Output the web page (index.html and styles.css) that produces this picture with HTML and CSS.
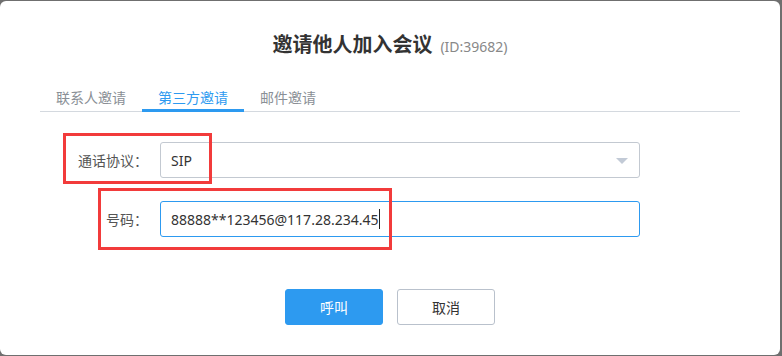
FILE: index.html
```html
<!DOCTYPE html>
<html lang="zh-CN">
<head>
<meta charset="utf-8">
<title>邀请他人加入会议</title>
<link rel="stylesheet" href="styles.css">
</head>
<body>
<div class="dialog">
  <div class="title-row">
    <h1 class="title">邀请他人加入会议</h1>
    <span class="meeting-id">(ID:39682)</span>
  </div>
  <div class="tabs">
    <div class="tab">联系人邀请</div>
    <div class="tab active">第三方邀请</div>
    <div class="tab">邮件邀请</div>
  </div>
  <div class="form">
    <div class="row">
      <label class="label">通话协议：</label>
      <div class="field select">
        <span class="value">SIP</span>
        <span class="arrow"></span>
      </div>
    </div>
    <div class="row row-number">
      <label class="label">号码：</label>
      <div class="field focus">
        <span class="value">88888**123456@117.28.234.45</span><span class="caret"></span>
      </div>
    </div>
  </div>
  <div class="actions">
    <button class="btn btn-primary">呼叫</button>
    <button class="btn btn-default">取消</button>
  </div>
  <div class="mark mark-protocol"></div>
  <div class="mark mark-number"></div>
</div>
</body>
</html>
```
FILE: styles.css
```css
html, body {
  margin: 0;
  padding: 0;
}
body {
  width: 782px;
  height: 356px;
  background: #6f6f6f;
  font-family: "Noto Sans", "Noto Sans CJK SC", sans-serif;
  overflow: hidden;
}
.dialog {
  position: relative;
  box-sizing: border-box;
  margin-top: 1px;
  width: 780px;
  height: 354px;
  background: #fff;
  border-radius: 6px;
  padding-top: 29px;
}
.title-row {
  display: flex;
  justify-content: center;
  align-items: baseline;
  gap: 8px;
  height: 28px;
}
.title {
  margin: 0;
  font-family: "Noto Sans CJK SC", sans-serif;
  font-size: 20px;
  line-height: 28px;
  font-weight: 700;
  color: #333;
}
.meeting-id {
  font-size: 14px;
  color: #888;
}
.tabs {
  display: flex;
  margin: 27px 40px 0;
  border-bottom: 1px solid #d4d9df;
}
.tab {
  padding: 0 16px;
  font-family: "Noto Sans CJK SC", sans-serif;
  font-size: 14px;
  line-height: 24px;
  color: #8a8f96;
  border-bottom: 3px solid transparent;
  margin-bottom: -1px;
}
.tab.active {
  color: #2d9af0;
  border-bottom-color: #2d9af0;
}
.form {
  display: flex;
  flex-direction: column;
  gap: 23px;
  margin-top: 30px;
}
.row {
  display: flex;
  align-items: center;
  gap: 12px;
}
.label {
  width: 148px;
  text-align: right;
  font-family: "Noto Sans CJK SC", sans-serif;
  font-size: 14px;
  color: #555;
}
.field {
  position: relative;
  box-sizing: border-box;
  width: 480px;
  height: 36px;
  border: 1px solid #c3c9d1;
  border-radius: 3px;
  padding: 0 10px;
  display: flex;
  align-items: center;
  font-size: 14px;
  color: #333;
}
.field.focus {
  border-color: #2d9af0;
}
.arrow {
  position: absolute;
  right: 11px;
  top: 15px;
  width: 0;
  height: 0;
  border-left: 6px solid transparent;
  border-right: 6px solid transparent;
  border-top: 6px solid #c2cad6;
}
.caret {
  display: inline-block;
  width: 1px;
  height: 20px;
  background: #222;
  margin-left: 1px;
}
.actions {
  display: flex;
  justify-content: center;
  gap: 14px;
  margin-top: 52px;
}
.btn {
  box-sizing: border-box;
  width: 98px;
  height: 36px;
  border-radius: 3px;
  font-family: "Noto Sans CJK SC", sans-serif;
  font-size: 14px;
  cursor: pointer;
}
.btn-primary {
  background: #2d9af0;
  border: 1px solid #2d9af0;
  color: #fff;
}
.btn-default {
  background: #fff;
  border: 1px solid #b9c1cc;
  color: #333;
}
.mark {
  position: absolute;
  border: 3px solid #f23b3b;
  box-sizing: border-box;
}
.mark-protocol {
  left: 63px;
  top: 132px;
  width: 149px;
  height: 51px;
}
.mark-number {
  left: 98px;
  top: 187px;
  width: 294px;
  height: 62px;
}
```
